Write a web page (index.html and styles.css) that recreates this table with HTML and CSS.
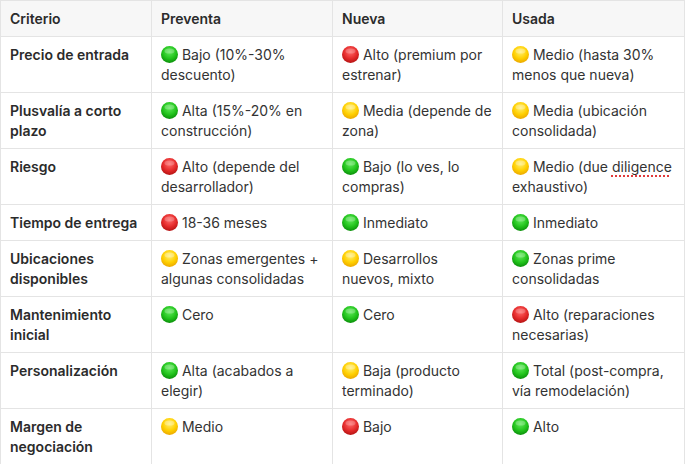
FILE: index.html
```html
<!DOCTYPE html>
<html lang="es">
<head>
<meta charset="utf-8">
<title>Comparativa</title>
<link rel="stylesheet" href="styles.css">
</head>
<body>
<svg width="0" height="0" class="defs" aria-hidden="true">
  <defs>
    <radialGradient id="gG" cx="50%" cy="35%" r="65%">
      <stop offset="0" stop-color="#5fe85a"/>
      <stop offset="0.6" stop-color="#22c41c"/>
      <stop offset="1" stop-color="#0b8f0b"/>
    </radialGradient>
    <radialGradient id="gR" cx="50%" cy="35%" r="65%">
      <stop offset="0" stop-color="#ff6a6a"/>
      <stop offset="0.6" stop-color="#e52b2b"/>
      <stop offset="1" stop-color="#b51313"/>
    </radialGradient>
    <radialGradient id="gY" cx="50%" cy="35%" r="65%">
      <stop offset="0" stop-color="#ffee70"/>
      <stop offset="0.6" stop-color="#ffd000"/>
      <stop offset="1" stop-color="#eba800"/>
    </radialGradient>
    <symbol id="dot-g" viewBox="0 0 17 17"><circle cx="8.5" cy="8.5" r="8.5" fill="url(#gG)"/><ellipse cx="8.5" cy="5" rx="5" ry="2.6" fill="#ffffff" opacity="0.25"/></symbol>
    <symbol id="dot-r" viewBox="0 0 17 17"><circle cx="8.5" cy="8.5" r="8.5" fill="url(#gR)"/><ellipse cx="8.5" cy="5" rx="5" ry="2.6" fill="#ffffff" opacity="0.22"/></symbol>
    <symbol id="dot-y" viewBox="0 0 17 17"><circle cx="8.5" cy="8.5" r="8.5" fill="url(#gY)"/><ellipse cx="8.5" cy="5" rx="5" ry="2.6" fill="#ffffff" opacity="0.3"/></symbol>
  </defs>
</svg>
<table class="cmp">
  <colgroup>
    <col class="c1"><col class="c2"><col class="c3"><col class="c4">
  </colgroup>
  <thead>
    <tr><th>Criterio</th><th>Preventa</th><th>Nueva</th><th>Usada</th></tr>
  </thead>
  <tbody>
    <tr>
      <th>Precio de entrada</th>
      <td><svg class="dot"><use href="#dot-g"/></svg> Bajo (10%-30% descuento)</td>
      <td><svg class="dot"><use href="#dot-r"/></svg> Alto (premium por estrenar)</td>
      <td><svg class="dot"><use href="#dot-y"/></svg> Medio (hasta 30% menos que nueva)</td>
    </tr>
    <tr>
      <th>Plusvalía a corto plazo</th>
      <td><svg class="dot"><use href="#dot-g"/></svg> Alta (15%-20% en construcción)</td>
      <td><svg class="dot"><use href="#dot-y"/></svg> Media (depende de zona)</td>
      <td><svg class="dot"><use href="#dot-y"/></svg> Media (ubicación consolidada)</td>
    </tr>
    <tr>
      <th>Riesgo</th>
      <td><svg class="dot"><use href="#dot-r"/></svg> Alto (depende del desarrollador)</td>
      <td><svg class="dot"><use href="#dot-g"/></svg> Bajo (lo ves, lo compras)</td>
      <td><svg class="dot"><use href="#dot-y"/></svg> Medio (due <span class="spell">diligence</span> exhaustivo)</td>
    </tr>
    <tr>
      <th>Tiempo de entrega</th>
      <td><svg class="dot"><use href="#dot-r"/></svg> 18-36 meses</td>
      <td><svg class="dot"><use href="#dot-g"/></svg> Inmediato</td>
      <td><svg class="dot"><use href="#dot-g"/></svg> Inmediato</td>
    </tr>
    <tr>
      <th>Ubicaciones disponibles</th>
      <td><svg class="dot"><use href="#dot-y"/></svg> Zonas emergentes + algunas consolidadas</td>
      <td><svg class="dot"><use href="#dot-y"/></svg> Desarrollos nuevos, mixto</td>
      <td><svg class="dot"><use href="#dot-g"/></svg> Zonas prime consolidadas</td>
    </tr>
    <tr>
      <th>Mantenimiento inicial</th>
      <td><svg class="dot"><use href="#dot-g"/></svg> Cero</td>
      <td><svg class="dot"><use href="#dot-g"/></svg> Cero</td>
      <td><svg class="dot"><use href="#dot-r"/></svg> Alto (reparaciones necesarias)</td>
    </tr>
    <tr>
      <th>Personalización</th>
      <td><svg class="dot"><use href="#dot-g"/></svg> Alta (acabados a elegir)</td>
      <td><svg class="dot"><use href="#dot-y"/></svg> Baja (producto terminado)</td>
      <td><svg class="dot"><use href="#dot-g"/></svg> Total (post-compra, vía remodelación)</td>
    </tr>
    <tr>
      <th>Margen de negociación</th>
      <td><svg class="dot"><use href="#dot-y"/></svg> Medio</td>
      <td><svg class="dot"><use href="#dot-r"/></svg> Bajo</td>
      <td><svg class="dot"><use href="#dot-g"/></svg> Alto</td>
    </tr>
  </tbody>
</table>
</body>
</html>
```

FILE: styles.css
```css
html, body {
  margin: 0;
  padding: 0;
  background: #ffffff;
}

body {
  font-family: Inter, "Noto Sans", "Liberation Sans", sans-serif;
  font-size: 14px;
  line-height: 20px;
  color: #333333;
}

.defs {
  position: absolute;
  width: 0;
  height: 0;
  overflow: hidden;
}

.cmp {
  border-collapse: collapse;
  table-layout: fixed;
  width: 684px;
}

.c1 { width: 151px; }
.c2 { width: 181px; }
.c3 { width: 170px; }
.c4 { width: 182px; }

.cmp th,
.cmp td {
  border: 1px solid #e4e4e4;
  padding: 8px 9px 7px 9px;
  text-align: left;
  vertical-align: top;
}

.cmp th {
  font-weight: 600;
  color: #2b2b2b;
}

.cmp thead th {
  background: #f7f7f7;
}

.cmp td {
  font-weight: 400;
}

.dot {
  width: 17px;
  height: 17px;
  vertical-align: -3px;
}

.spell {
  text-decoration: underline dotted #e03a3a;
  text-decoration-thickness: 1.5px;
  text-underline-offset: 3px;
}
```
